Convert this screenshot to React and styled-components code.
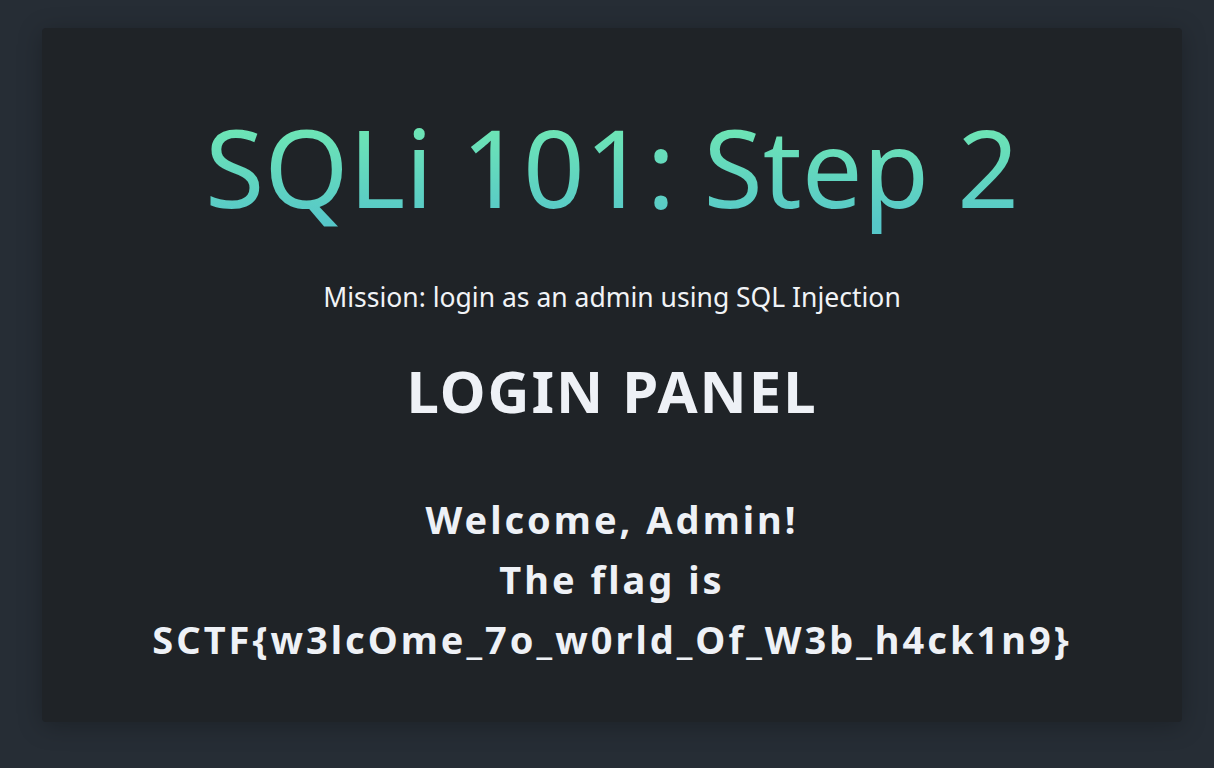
import styled, { createGlobalStyle } from 'styled-components';

const GlobalStyle = createGlobalStyle`
  html, body {
    margin: 0;
    padding: 0;
    background: #262d35;
  }
  body {
    font-family: "Noto Sans", "Noto Sans CJK KR", sans-serif;
  }
`;

const Page = styled.div`
  min-height: 768px;
  box-sizing: border-box;
  padding: 28px 32px 46px 42px;
`;

const Card = styled.div`
  width: 1140px;
  height: 694px;
  box-sizing: border-box;
  background: #1f2327;
  border-radius: 4px;
  box-shadow: 0 4px 24px rgba(0, 0, 0, 0.25);
  display: flex;
  flex-direction: column;
  align-items: center;
  padding-top: 69px;
`;

const Title = styled.h1`
  margin: 0;
  font-size: 108px;
  font-weight: 400;
  line-height: 140px;
  background: linear-gradient(180deg, #6ee6b4 20%, #56c7c9 90%);
  -webkit-background-clip: text;
  background-clip: text;
  color: transparent;
`;

const Mission = styled.p`
  margin: 43px 0 0;
  font-size: 26.5px;
  line-height: 34px;
  color: #f1f3f6;
`;

const PanelHeading = styled.h2`
  margin: 45px 0 0;
  font-size: 58px;
  line-height: 64px;
  font-weight: 700;
  letter-spacing: 2px;
  color: #eef1f6;
`;

const Message = styled.div`
  margin-top: 66px;
  display: flex;
  flex-direction: column;
  align-items: center;
`;

const Line = styled.div`
  font-size: 38px;
  line-height: 60px;
  font-weight: 700;
  letter-spacing: 3px;
  color: #eef1f6;
`;

export default function App() {
  return (
    <>
      <GlobalStyle />
      <Page>
        <Card>
          <Title>SQLi 101: Step 2</Title>
          <Mission>Mission: login as an admin using SQL Injection</Mission>
          <PanelHeading>LOGIN PANEL</PanelHeading>
          <Message>
            <Line>Welcome, Admin!</Line>
            <Line>The flag is</Line>
            <Line>SCTF{'{'}w3lcOme_7o_w0rld_Of_W3b_h4ck1n9{'}'}</Line>
          </Message>
        </Card>
      </Page>
    </>
  );
}
